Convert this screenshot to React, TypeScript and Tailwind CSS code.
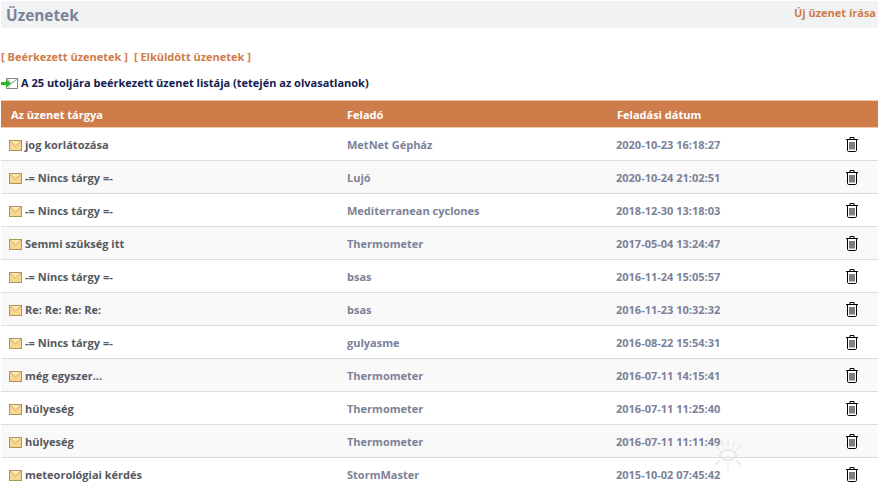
import React from 'react';

const messages = [
  { subject: 'jog korlátozása', from: 'MetNet Gépház', date: '2020-10-23 16:18:27' },
  { subject: '-= Nincs tárgy =-', from: 'Lujó', date: '2020-10-24 21:02:51' },
  { subject: '-= Nincs tárgy =-', from: 'Mediterranean cyclones', date: '2018-12-30 13:18:03' },
  { subject: 'Semmi szükség itt', from: 'Thermometer', date: '2017-05-04 13:24:47' },
  { subject: '-= Nincs tárgy =-', from: 'bsas', date: '2016-11-24 15:05:57' },
  { subject: 'Re: Re: Re: Re:', from: 'bsas', date: '2016-11-23 10:32:32' },
  { subject: '-= Nincs tárgy =-', from: 'gulyasme', date: '2016-08-22 15:54:31' },
  { subject: 'még egyszer...', from: 'Thermometer', date: '2016-07-11 14:15:41' },
  { subject: 'hülyeség', from: 'Thermometer', date: '2016-07-11 11:25:40' },
  { subject: 'hülyeség', from: 'Thermometer', date: '2016-07-11 11:11:49' },
  { subject: 'meteorológiai kérdés', from: 'StormMaster', date: '2015-10-02 07:45:42' },
];

function Envelope() {
  return (
    <svg width="13" height="11" viewBox="0 0 13 11" className="shrink-0">
      <rect x="0.5" y="0.5" width="12" height="10" fill="#f7d78f" stroke="#b0935f" />
      <path d="M1 1l5.5 5L12 1" fill="#fce6b5" stroke="#d0a25a" strokeWidth="0.9" />
    </svg>
  );
}

function ReadIcon() {
  return (
    <svg width="17" height="11" viewBox="0 0 17 11" className="shrink-0">
      <rect x="5.5" y="0.5" width="11" height="10" fill="#fff" stroke="#858a85" />
      <path d="M6 1l5 4 5-4M7 10l4-5M16 1l-5 4" fill="none" stroke="#9aa09a" strokeWidth="0.7" />
      <path d="M0 4h5V1l5 4.5L5 10V7H0z" fill="#2fb52a" />
    </svg>
  );
}

function Trash() {
  return (
    <svg width="12" height="15" viewBox="0 0 12 15" fill="none" stroke="#000" className="mb-[2px] shrink-0">
      <path d="M0 2.5h12" strokeWidth="1" />
      <path d="M4 2.5V.5h4v2" strokeWidth="1" />
      <path d="M1.5 2.5v10.8c0 .7.5 1.2 1.2 1.2h6.6c.7 0 1.2-.5 1.2-1.2V2.5" strokeWidth="1" />
      <path d="M4 5v7.5M6 5v7.5M8 5v7.5" strokeWidth="1" />
    </svg>
  );
}

function Sun() {
  return (
    <svg width="34" height="34" viewBox="0 0 34 34" fill="none" stroke="#e2e2e2" strokeWidth="1.2" className="absolute left-[711px] top-[438px] opacity-80">
      <ellipse cx="17" cy="17" rx="8" ry="5" strokeWidth="1.8" />
      <path d="M17 2v7M17 25v7M10.5 3l1.5 6M23.5 3L22 9M4 7l5 5M30 7l-5 5M4 27l5-5M30 27l-5-5" />
    </svg>
  );
}

export default function App() {
  return (
    <div className="relative h-[490px] w-[878px] overflow-hidden bg-white font-['Open_Sans',sans-serif] font-bold">
      <div className="ml-px mt-px flex h-[27px] items-center justify-between rounded-[3px] bg-[#f1f2f4] pl-[5px] pr-[2px]">
        <h1 className="mt-[2px] text-[15.4px] leading-none font-bold text-[#7b8298]">Üzenetek</h1>
        <a className="mb-[3px] text-[11px] text-[#cf7c4b]">Új üzenet írása</a>
      </div>

      <div className="mt-[21px] flex gap-[6px] pl-px text-[11px] leading-[16px] text-[#cf7c4b]">
        <a>[ Beérkezett üzenetek ]</a>
        <a>[ Elküldött üzenetek ]</a>
      </div>

      <div className="mt-[10px] flex h-[16px] items-center gap-[3px] pl-px text-[11px] text-[#14204f]">
        <ReadIcon />
        <span>A 25 utoljára beérkezett üzenet listája (tetején az olvasatlanok)</span>
      </div>

      <div className="ml-px mt-[9px] grid h-[28px] grid-cols-[346px_269px_1fr] items-center border-y border-[#eec9b0] bg-[#cf7c4b] pt-[2px] text-[11px] text-white">
        <span className="pl-[10px]">Az üzenet tárgya</span>
        <span>Feladó</span>
        <span className="pl-px">Feladási dátum</span>
      </div>

      <div className="text-[11px]">
        {messages.map((m, i) => (
          <div
            key={i}
            className={`ml-px grid h-[33px] grid-cols-[346px_269px_230px_1fr] items-center border-b border-[#dcdcdc] pt-[2px] ${i % 2 === 1 ? 'bg-[#f9f9f9]' : 'bg-white'}`}
          >
            <div className="flex items-center gap-[3px] pl-[8px] text-[#55585f]">
              <Envelope />
              <span>{m.subject}</span>
            </div>
            <span className="text-[#7b8298]">{m.from}</span>
            <span className="text-[#7b8298]">{m.date}</span>
            <Trash />
          </div>
        ))}
      </div>
      <Sun />
    </div>
  );
}
